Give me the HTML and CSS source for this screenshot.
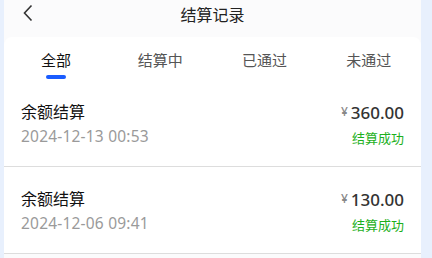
FILE: index.html
```html
<!DOCTYPE html>
<html lang="zh">
<head>
<meta charset="UTF-8" />
<meta name="viewport" content="width=device-width, initial-scale=1" />
<title>结算记录</title>
<link rel="stylesheet" href="styles.css">
</head>
<body>
<div class="page">
  <!-- barre du haut -->
  <div class="nav-bar">
    <span class="back">
      <svg viewBox="0 0 12 18" width="12" height="18" aria-hidden="true">
        <path d="M9.5 1.5L2.5 9l7 7.5" fill="none" stroke="#333" stroke-width="1.6" />
      </svg>
    </span>
    <div class="nav-title">结算记录</div>
  </div>

  <div class="card">
    <div class="tabs">
      <div class="tab active">全部</div>
      <div class="tab">结算中</div>
      <div class="tab">已通过</div>
      <div class="tab">未通过</div>
    </div>

    <div class="record">
      <div class="record-left">
        <div class="record-title">余额结算</div>
        <div class="record-date">2024-12-13 00:53</div>
      </div>
      <div class="record-right">
        <div class="amount"><span class="yen">¥</span>360.00</div>
        <div class="status">结算成功</div>
      </div>
    </div>

    <div class="record">
      <div class="record-left">
        <div class="record-title">余额结算</div>
        <div class="record-date">2024-12-06 09:41</div>
      </div>
      <div class="record-right">
        <div class="amount"><span class="yen">¥</span>130.00</div>
        <div class="status">结算成功</div>
      </div>
    </div>
  </div>
</div>
</body>
</html>
```

FILE: styles.css
```css
body {
  margin: 0;
  background: #e8f0fd;
  font-family: "Noto Sans", "Noto Sans CJK SC", sans-serif;
  color: #111;
}
.page {
  margin: 0 11px 0 4px;
  background: #fbfbfc;
  min-height: 258px;
}
/* barre du haut */
.nav-bar {
  height: 37px;
  position: relative;
  display: flex;
  align-items: center;
  justify-content: center;
}
.back {
  position: absolute;
  left: 18px;
  top: 4px;
  height: 18px;
}
.nav-title {
  font-size: 16px;
  color: #222;
  margin-top: -10px;
}
.card {
  background: #fff;
  border-radius: 8px 8px 0 0;
}
.tabs {
  display: flex;
  height: 43px;
}
.tab {
  flex: 1;
  text-align: center;
  font-size: 15px;
  color: #555;
  padding-top: 10px;
  line-height: 26px;
  position: relative;
}
.tab.active {
  color: #111;
}
.tab.active::after {
  content: "";
  position: absolute;
  left: 50%;
  top: 38px;
  width: 20px;
  height: 4px;
  margin-left: -10px;
  border-radius: 2px;
  background: #1a5cff;
}
.record {
  display: flex;
  justify-content: space-between;
  height: 86px;
  padding: 0 17px;
  border-bottom: 1px solid #ddd;
}
.record-left {
  padding-top: 20px;
}
.record-title {
  font-size: 16px;
  line-height: 24px;
  color: #111;
}
.record-date {
  font-size: 15.5px;
  line-height: 22px;
  color: #9a9a9a;
  margin-top: 1px;
  letter-spacing: 0.2px;
}
.record-right {
  padding-top: 20px;
  text-align: right;
}
.amount {
  font-size: 17px;
  line-height: 24px;
  font-weight: 500;
  color: #333;
}
.yen {
  font-size: 12px;
  color: #888;
  margin-right: 3px;
  vertical-align: 3px;
}
.status {
  font-size: 13px;
  line-height: 22px;
  color: #1db01d;
  margin-top: 2px;
}
```
